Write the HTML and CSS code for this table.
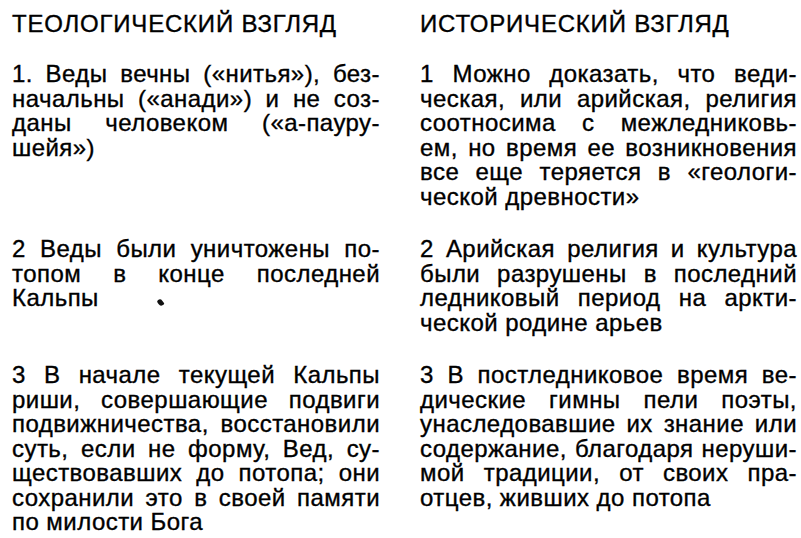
FILE: index.html
```html
<!DOCTYPE html>
<html lang="ru">
<head>
<meta charset="utf-8">
<title>Теологический и исторический взгляд</title>
<link rel="stylesheet" href="styles.css">
</head>
<body>
<div class="page">
  <h2 class="head">ТЕОЛОГИЧЕСКИЙ ВЗГЛЯД</h2>
  <h2 class="head">ИСТОРИЧЕСКИЙ ВЗГЛЯД</h2>

  <p class="para">
    <span class="ln">1. Веды вечны («нитья»), без-</span>
    <span class="ln">начальны («анади») и не соз-</span>
    <span class="ln">даны человеком («а-пауру-</span>
    <span class="ln last">шейя»)</span>
  </p>
  <p class="para">
    <span class="ln">1 Можно доказать, что веди-</span>
    <span class="ln">ческая, или арийская, религия</span>
    <span class="ln">соотносима с межледниковь-</span>
    <span class="ln">ем, но время ее возникновения</span>
    <span class="ln">все еще теряется в «геологи-</span>
    <span class="ln last">ческой древности»</span>
  </p>

  <p class="para">
    <span class="ln">2 Веды были уничтожены по-</span>
    <span class="ln">топом в конце последней</span>
    <span class="ln last">Кальпы <span class="speck"></span></span>
  </p>
  <p class="para">
    <span class="ln">2 Арийская религия и культура</span>
    <span class="ln">были разрушены в последний</span>
    <span class="ln">ледниковый период на аркти-</span>
    <span class="ln last">ческой родине арьев</span>
  </p>

  <p class="para">
    <span class="ln">3 В начале текущей Кальпы</span>
    <span class="ln">риши, совершающие подвиги</span>
    <span class="ln">подвижничества, восстановили</span>
    <span class="ln">суть, если не форму, Вед, су-</span>
    <span class="ln">ществовавших до потопа; они</span>
    <span class="ln">сохранили это в своей памяти</span>
    <span class="ln last">по милости Бога</span>
  </p>
  <p class="para">
    <span class="ln">3 В постледниковое время ве-</span>
    <span class="ln">дические гимны пели поэты,</span>
    <span class="ln">унаследовавшие их знание или</span>
    <span class="ln">содержание, благодаря неруши-</span>
    <span class="ln">мой традиции, от своих пра-</span>
    <span class="ln last">отцев, живших до потопа</span>
  </p>
</div>
</body>
</html>
```

FILE: styles.css
```css
html, body {
  margin: 0;
  padding: 0;
  background: #ffffff;
}

body {
  width: 801px;
  height: 538px;
  overflow: hidden;
  color: #000000;
  font-family: "Liberation Sans", Arial, sans-serif;
  font-size: 24px;
  line-height: 24.5px;
  letter-spacing: 0.45px;
  -webkit-text-stroke: 0.35px #000;
}

.page {
  display: grid;
  grid-template-columns: 368px 377px;
  column-gap: 40px;
  row-gap: 28px;
  padding: 11.5px 0 0 12px;
  align-items: start;
}

.head {
  margin: 0 0 -2px 0;
  font-size: 24px;
  font-weight: normal;
  line-height: 24.5px;
  letter-spacing: 0.8px;
}

.para {
  margin: 0;
}

.ln {
  display: block;
  text-align: justify;
  text-align-last: justify;
  white-space: nowrap;
}

.ln.last {
  text-align: left;
  text-align-last: left;
}

.speck {
  display: inline-block;
  width: 5px;
  height: 7px;
  margin-left: 52px;
  background: #111;
  border-radius: 2px 3px 1px 3px;
  transform: rotate(-35deg);
  vertical-align: 0;
}
```
